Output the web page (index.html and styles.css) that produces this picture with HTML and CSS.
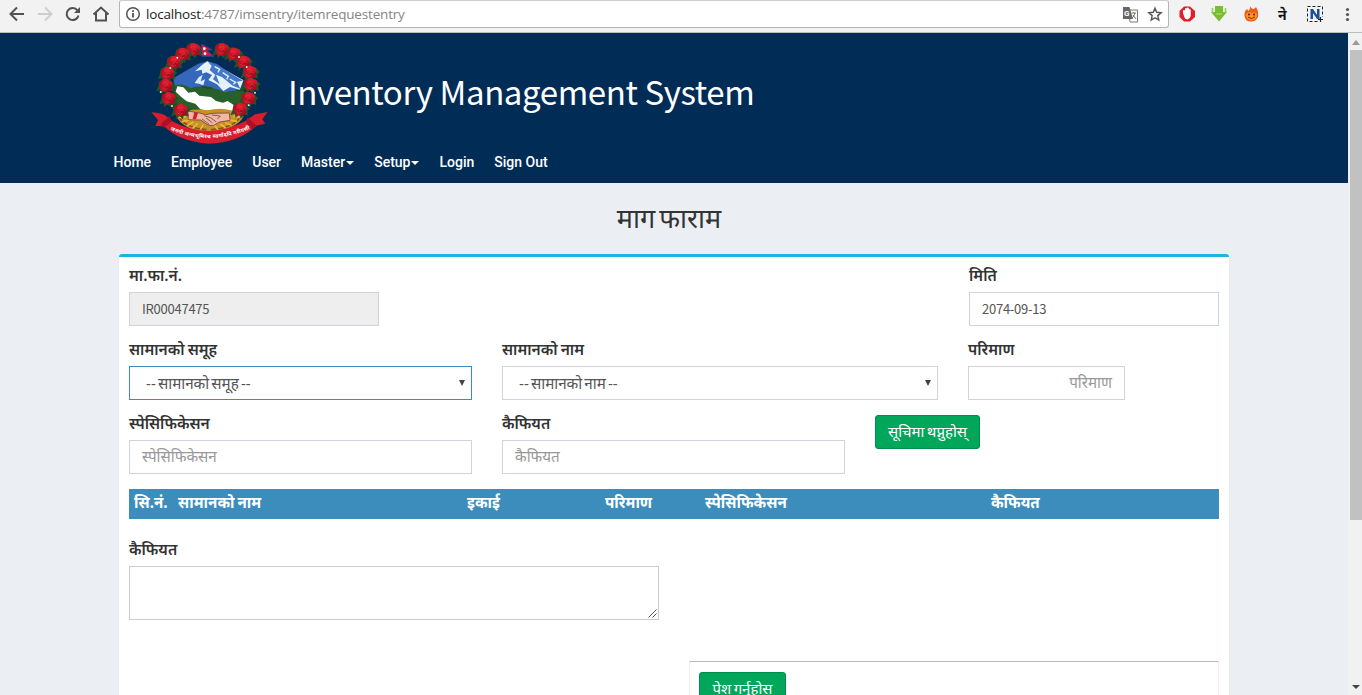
FILE: index.html
```html
<!DOCTYPE html>
<html lang="ne">
<head>
<meta charset="utf-8">
<title>Inventory Management System</title>
<link rel="stylesheet" href="styles.css">
</head>
<body>
<div class="browser-bar">
  <svg class="nav-icons" width="119" height="28" viewBox="0 0 119 28" fill="none" stroke="#505153" stroke-width="2">
    <path d="M24 14H11M17 7.5L10.5 14L17 20.5"/>
    <path d="M38 14H51M45 7.5L51.500 14L45 20.500" stroke="#cecece"/>
    <path d="M77.500 10.500A6 6 0 1 0 78.500 15.500"/><path d="M80 7V13H74Z" fill="#505153" stroke="none"/>
    <path d="M93.500 14.500L101 7.500L108.500 14.500M96 13V20.500H106V13"/>
  </svg>
  <div class="address">
    <svg width="16" height="16" viewBox="0 0 16 16" fill="none" stroke="#505153" stroke-width="1.500"><circle cx="8" cy="8" r="6.300"/><path d="M8 7V11.500M8 4.300V6" stroke-width="1.800"/></svg>
    <span class="url"><b>localhost</b>:4787/imsentry/itemrequestentry</span>
    <svg class="address-actions" width="44" height="20" viewBox="0 0 44 20">
      <path d="M8 6H16.500V18H9Z" fill="#fff" stroke="#777"/><path d="M2 3H8.500L12 15H2Z" fill="#666"/>
      <text x="3" y="12" class="g-letter">G</text><path d="M10.500 9H15M12.700 8V9M14 9Q13 13 11 14M12 11L15 15" fill="none" stroke="#777"/>
      <path d="M34 4.200L35.700 8.300L40.200 8.700L36.800 11.600L37.800 16L34 13.700L30.200 16L31.200 11.600L27.800 8.700L32.300 8.300Z" fill="none" stroke="#555" stroke-width="1.400"/>
    </svg>
  </div>
  <svg class="extensions" width="193" height="28" viewBox="1169 0 193 28">
    <path d="M1184 6.500H1190L1195 11V17L1190 21.500H1184L1179.500 17V11Z" fill="#e01f2c"/>
    <path d="M1183 13V10.500Q1184 9.500 1185 10.500V8.500Q1186 7.500 1187 8.500V7.800Q1188 7 1189 8.200V9.500Q1190 8.500 1190.700 10V16Q1190 19 1187.500 19.500Q1184.500 19 1184 16Z" fill="#fff"/>
    <path d="M1215 6H1223V12H1227L1219 21.500L1211 12H1215Z" fill="#78bd32"/><path d="M1212.500 8V13M1225.500 8V13" stroke="#8fcf51" stroke-width="1.500"/><path d="M1216 14H1222" stroke="#b5e684"/>
    <path d="M1250 6Q1251 9 1254 9L1256 7Q1259 12 1258 17Q1256 21.500 1251 21.500Q1245 21.500 1244.500 16Q1244 11 1247 9L1248.500 11Q1250 10 1250 6Z" fill="#ee5d19"/>
    <path d="M1246 14Q1249 11 1251.500 13Q1254 11 1257 14Q1257 20 1251.500 20Q1246 20 1246 14Z" fill="#ff9522"/>
    <circle cx="1249" cy="14.500" r="1.100" fill="#652514"/><circle cx="1254" cy="14.500" r="1.100" fill="#652514"/><path d="M1248 17Q1251.500 20 1255 17" fill="none" stroke="#7a2a14"/>
    <text x="1278" y="20" class="nepali-ext">ने</text>
    <rect x="1307.500" y="6.500" width="15" height="15" fill="none" stroke="#222" stroke-dasharray="3 2"/>
    <path d="M1318 17H1325V24H1318Z" fill="#f2f2f2"/>
    <path d="M1310.500 9H1313L1317 15V9H1319.500V19H1317L1313 13V19H1310.500Z" fill="#174f9d"/><path d="M1320.500 17V22M1318 19.500H1323" stroke="#222" stroke-width="1.200"/>
    <g fill="#555"><circle cx="1347.500" cy="9.500" r="1.600"/><circle cx="1347.500" cy="14.500" r="1.600"/><circle cx="1347.500" cy="19.500" r="1.600"/></g>
  </svg>
</div>
<div class="viewport">
<div class="page">
  <header class="header">
    <div class="brand">
      <svg class="emblem" width="140" height="112" viewBox="0 0 420 336">
        <defs>
          <g id="rose"><g transform="scale(1.1)"><path d="M-21 5L-26 17L-14 13L-12 25L-4 16L6 25L9 14L22 18L20 6L27 0L17-10L8-15L-8-17L-18-10Z" fill="#235522"/><circle cx="-8" cy="-3" r="10" fill="#b90d24"/><circle cx="8" cy="-4" r="10" fill="#ce172b"/><circle cx="-5" cy="7" r="10" fill="#c31227"/><circle cx="8" cy="7" r="9" fill="#a90c20"/><circle cy="-8" r="9" fill="#d81b2d"/><path d="M-10-4Q-3-12 6-5M-3 4Q4-3 11 3M-9 8Q-2 14 5 9" fill="none" stroke="#e5323e" stroke-width="2"/></g></g>
        </defs>
        <path d="M101 126L150 98L180 83L202 76L231 86L263 107L309 132L317 208L270 270H145L95 216Z" fill="#224d2b"/>
        <path d="M100 127L147 99L175 83L202 76L231 84L262 106L311 133L301 160L246 174L215 154L190 149L142 165L105 151Z" fill="#3568bd"/>
        <path d="M202 76L222 88L262 106L310 133L299 161L270 153L250 165L231 145L205 132L216 117L199 109L187 113L185 101L165 106L187 86Z" fill="#e6f1fa"/>
        <path d="M204 78L215 90L209 102L226 117L219 130L239 145L228 116L247 124L278 149L301 158L291 137L309 134L262 106L226 87Z" fill="#4278c7"/>
        <path d="M164 141L176 124L188 116L182 136L195 130L190 148L177 143Z" fill="#d8edf9"/><path d="M224 92L239 100L234 109M248 110L265 121L260 130M269 129L287 139L280 145" fill="none" stroke="#e1f0fa" stroke-width="4"/>
        <path d="M103 149Q128 139 153 157Q174 145 204 160Q224 152 253 169Q281 162 316 168L307 228L248 253L112 216Z" fill="#276029"/>
        <path d="M112 151L130 154L145 170L165 167L178 179L213 183L228 195L249 200L263 195L282 208L286 226L274 233H223L202 224L181 220L166 203L140 196L124 183L107 167Z" fill="#fff"/>
        <path d="M108 238Q152 213 203 223Q260 208 311 240Q295 278 205 293Q125 280 108 238Z" fill="#c79028"/>
        <g fill="none" stroke="#875316" stroke-width="5"><path d="M111 236Q134 277 199 281M307 236Q280 278 213 281"/><path d="M115 245L137 242M125 257L148 252M141 269L160 258M158 277L173 262M181 281L190 265M300 244L280 241M291 256L270 252M275 268L256 260M257 276L241 264M234 282L222 265" stroke="#efb83b"/></g>
        <path d="M143 225L178 231L197 236L220 232L268 231L270 253L239 258L221 268Q210 271 199 264L182 252L145 251Z" fill="#efb8a4" stroke="#5b3025" stroke-width="2"/>
        <path d="M163 228L174 231L168 250L158 249Z" fill="#d41e2e"/><path d="M192 239L212 245L229 258M216 237L241 240L232 249M186 249L208 265M198 246L217 260" fill="none" stroke="#78443a" stroke-width="2.500"/>
        <use href="#rose" x="160" y="40"/><use href="#rose" x="128" y="54"/><use href="#rose" x="102" y="78"/><use href="#rose" x="82" y="111"/><use href="#rose" x="77" y="148"/><use href="#rose" x="86" y="187"/><use href="#rose" x="122" y="222"/>
        <use href="#rose" x="246" y="40"/><use href="#rose" x="281" y="53"/><use href="#rose" x="310" y="77"/><use href="#rose" x="330" y="108"/><use href="#rose" x="332" y="145"/><use href="#rose" x="325" y="187"/><use href="#rose" x="300" y="219"/>
        <g fill="#f4e7d6"><circle cx="112" cy="65" r="3"/><circle cx="91" cy="96" r="3"/><circle cx="62" cy="168" r="3"/><circle cx="96" cy="210" r="3"/><circle cx="297" cy="63" r="3"/><circle cx="320" cy="93" r="3"/><circle cx="345" cy="170" r="3"/><circle cx="326" cy="208" r="3"/></g>
        <path d="M185 24L217 42H199L222 61H185Z" fill="#dc1832" stroke="#29438e" stroke-width="3"/><circle cx="193" cy="38" r="4" fill="#fff"/><circle cx="195" cy="53" r="4" fill="#fff"/>
        <path d="M34 229Q65 230 82 242L96 255Q204 315 318 254L345 235L383 228L367 250L376 263L349 269Q298 320 205 323Q120 318 72 271L46 270L54 252Z" fill="#d81d2d"/>
        <path d="M62 265L88 240L95 257L71 275ZM350 270L323 243L318 258L336 280Z" fill="#a91325"/>
        <path id="motto-curve" d="M91 282Q205 333 333 278" fill="none"/>
        <text class="motto"><textPath href="#motto-curve" textLength="246">जननी जन्मभूमिश्च स्वर्गादपि गरीयसी</textPath></text>
      </svg>
      <h1 class="title">Inventory Management System</h1>
    </div>
    <nav class="menu"><a>Home</a><a>Employee</a><a>User</a><a>Master<i class="caret"></i></a><a>Setup<i class="caret"></i></a><a>Login</a><a>Sign Out</a></nav>
  </header>
  <h2 class="form-title"><span>माग फाराम</span></h2>
  <main class="box">
    <div class="row first">
      <div class="field w250"><label>मा.फा.नं.</label><div class="control readonly latin">IR00047475</div></div>
      <div class="field w250"><label>मिति</label><div class="control latin">2074-09-13</div></div>
    </div>
    <div class="row">
      <div class="field w343"><label>सामानको समूह</label><div class="control select focused"><span>-- सामानको समूह --</span><i class="arrow"></i></div></div>
      <div class="field w436"><label>सामानको नाम</label><div class="control select"><span>-- सामानको नाम --</span><i class="arrow"></i></div></div>
      <div class="field w157"><label>परिमाण</label><div class="control hint right">परिमाण</div></div>
    </div>
    <div class="row">
      <div class="field w343"><label>स्पेसिफिकेसन</label><div class="control hint">स्पेसिफिकेसन</div></div>
      <div class="field w343"><label>कैफियत</label><div class="control hint">कैफियत</div></div>
      <button class="button add">सूचिमा थप्नुहोस्</button>
    </div>
    <div class="table-head"><span>सि.नं.</span><span>सामानको नाम</span><span>इकाई</span><span>परिमाण</span><span>स्पेसिफिकेसन</span><span>कैफियत</span></div>
    <div class="field remarks"><label>कैफियत</label><div class="textarea"><svg width="9" height="9" viewBox="0 0 9 9" stroke="#555" stroke-width="1"><path d="M0.500 8.500L8.500 .5M4.500 8.500L8.500 4.500"/></svg></div></div>
    <div class="submit-area"><button class="button submit">पेश गर्नुहोस</button></div>
  </main>
</div>
<div class="scrollbar"><i class="up"></i><div class="thumb"></div><i class="down"></i></div>
</div>
</body>
</html>
```
FILE: styles.css
```css
* { box-sizing: border-box; }
body { margin: 0; width: 1362px; height: 695px; overflow: hidden; font-family: "Noto Sans", "Noto Sans Devanagari", sans-serif; color: #333; }
.browser-bar { display: flex; height: 33px; background: #f2f2f2; border-bottom: 1px solid #b9bdc2; }
.address { display: flex; align-items: center; width: 1050px; height: 28px; padding: 0 3px 0 5px; background: #fff; border: 1px solid #b5b5b5; border-top-color: #ccc; border-radius: 3px; }
.url { margin-left: 5px; font: 13.5px/20px "Open Sans", sans-serif; letter-spacing: -0.18px; color: #858585; white-space: nowrap; }
.url b { color: #222; font-weight: 400; }
.address-actions { margin-left: auto; }
.g-letter { font: bold 8px Roboto, sans-serif; fill: #fff; }
.nepali-ext { font: bold 14px "Noto Sans", sans-serif; fill: #111; }
.viewport { display: flex; height: 662px; }
.page { width: 1348px; overflow: hidden; background: #ebeef3; }
.header { height: 150px; background: #002c56; color: #fff; }
.brand { display: flex; height: 115px; padding: 3px 0 0 140px; }
.emblem { flex: none; }
.motto { font: bold 16px "Noto Sans", sans-serif; fill: #fff; }
.title { margin: 25px 0 0 8px; font: 400 33px/60px "Noto Sans CJK SC", sans-serif; letter-spacing: -0.4px; white-space: nowrap; height: 60px; }
.menu { display: flex; gap: 20px; padding-left: 113.5px; font: 500 14px/28px Roboto, sans-serif; }
.menu a { display: flex; align-items: center; }
.caret { border: 4px solid transparent; border-top-color: #fff; border-bottom: 0; margin: 2px 0 0 1px; }
.form-title { height: 71px; margin: 0; padding-right: 10px; text-align: center; font-size: 27px; font-weight: 400; line-height: 70px; word-spacing: -3px; }
.box { display: flex; flex-direction: column; width: 1110px; height: 480px; margin-left: 119px; padding: 10px 10px 0; background: #fff; border-top: 3px solid #1bb5df; border-radius: 3px; box-shadow: 0 1px 1px #ccc; }
.row { display: flex; gap: 30px; height: 74px; flex: none; }
.first { justify-content: space-between; }
.field label { display: block; height: 25px; font-size: 15.5px; font-weight: 600; line-height: 17px; word-spacing: -1px; white-space: nowrap; }
.w250 { width: 250px; } .w343 { width: 343px; } .w436 { width: 436px; } .w157 { width: 157px; }
.control { display: flex; align-items: center; height: 34px; border: 1px solid #d0d3da; padding: 0 12px 2px; font-size: 15.2px; color: #555; white-space: nowrap; }
.readonly { background: #eee; }
.latin { padding: 0 12px 1px; font-family: "Noto Sans CJK SC", sans-serif; font-size: 13px; letter-spacing: -0.25px; }
.select { padding: 0 6px 1px 16px; justify-content: space-between; word-spacing: -1.8px; }
.focused { border-color: #3c8dbc; }
.arrow { border: 3.5px solid transparent; border-top: 6px solid #444; border-bottom: 0; }
.hint { color: #999; }
.right { justify-content: flex-end; }
.button { border: 1px solid #008d4c; border-radius: 3px; background: #00a65a; color: #fff; height: 34px; padding: 0 0 2px; font: 15px/28px "Noto Sans", sans-serif; word-spacing: -1.5px; white-space: nowrap; }
.add { width: 105px; }
.table-head { display: grid; flex: none; grid-template-columns: 44px 289px 138px 100px 286px 1fr; height: 30px; padding-left: 5px; background: #3c8dbc; color: #fff; font-size: 15.2px; font-weight: 700; line-height: 27px; word-spacing: -1px; white-space: nowrap; }
.remarks { flex: none; width: 530px; margin-top: 22px; }
.textarea { display: flex; justify-content: flex-end; align-items: flex-end; padding: 1px; height: 54px; border: 1px solid #ccc; }
.submit-area { flex: none; width: 530px; height: 80px; margin: 41px 0 0 560px; padding: 10px 0 0 9px; border: 1px solid #eee; border-top-color: #bbb; border-bottom: 0; }
.submit { display: block; width: 87px; }
.scrollbar { display: flex; flex-direction: column; align-items: center; width: 14px; padding: 7px 0 6px 2px; background: #f1f1f1; }
.thumb { width: 12px; height: 470px; margin-top: 5px; background: #c1c1c1; }
.up { height: 5px; border: 4px solid transparent; border-bottom: 5px solid #999; border-top: 0; }
.down { margin-top: auto; border: 4px solid transparent; border-top: 4px solid #444; border-bottom: 0; }
```
